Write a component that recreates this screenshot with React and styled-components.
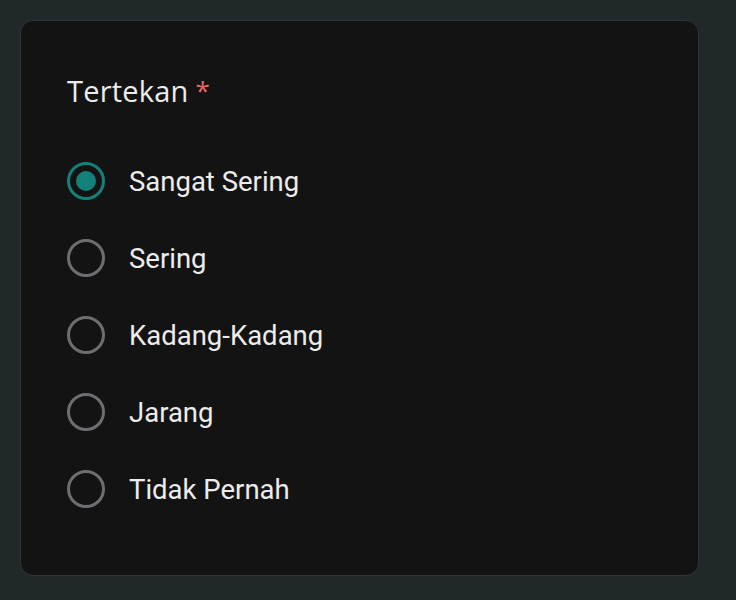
import styled, { createGlobalStyle } from 'styled-components';

const options = ['Sangat Sering', 'Sering', 'Kadang-Kadang', 'Jarang', 'Tidak Pernah'];

const GlobalStyle = createGlobalStyle`
  html, body {
    margin: 0;
    padding: 0;
    background: #212829;
  }
  * {
    box-sizing: border-box;
  }
`;

const App = () => {
  return (
    <Page>
      <GlobalStyle />
      <Card>
        <Title>
          Tertekan<Required>*</Required>
        </Title>
        <OptionList>
          {options.map((label, i) => (
            <Option key={label}>
              <Radio $checked={i === 0} />
              <Label>{label}</Label>
            </Option>
          ))}
        </OptionList>
      </Card>
    </Page>
  );
};

const Page = styled.div`
  width: 736px;
  height: 600px;
  padding: 20px 37px 24px 20px;
  background: #212829;
`;

const Card = styled.div`
  height: 556px;
  background: #131313;
  border: 1px solid #2f3536;
  border-radius: 13px;
  padding: 51px 0 0 46px;
`;

const Title = styled.div`
  font-family: 'Open Sans', 'Roboto', sans-serif;
  font-size: 29px;
  line-height: 36px;
  height: 36px;
  color: #ececec;
  letter-spacing: 0.2px;
`;

const Required = styled.span`
  color: #ee675c;
  margin-left: 7px;
  font-size: 26px;
  vertical-align: 2px;
`;

const OptionList = styled.div`
  display: flex;
  flex-direction: column;
  gap: 39px;
  margin-top: 54px;
`;

const Option = styled.div`
  display: flex;
  align-items: center;
  gap: 24px;
  height: 38px;
`;

const Radio = styled.div`
  width: 38px;
  height: 38px;
  border-radius: 50%;
  border: 3px solid ${(p) => (p.$checked ? '#138079' : '#6c6e71')};
  display: flex;
  align-items: center;
  justify-content: center;
  flex-shrink: 0;
  &::after {
    content: '';
    width: 20px;
    height: 20px;
    border-radius: 50%;
    background: #138079;
    display: ${(p) => (p.$checked ? 'block' : 'none')};
  }
`;

const Label = styled.span`
  font-family: 'Roboto', sans-serif;
  font-size: 27.5px;
  color: #ececec;
`;

export default App;
